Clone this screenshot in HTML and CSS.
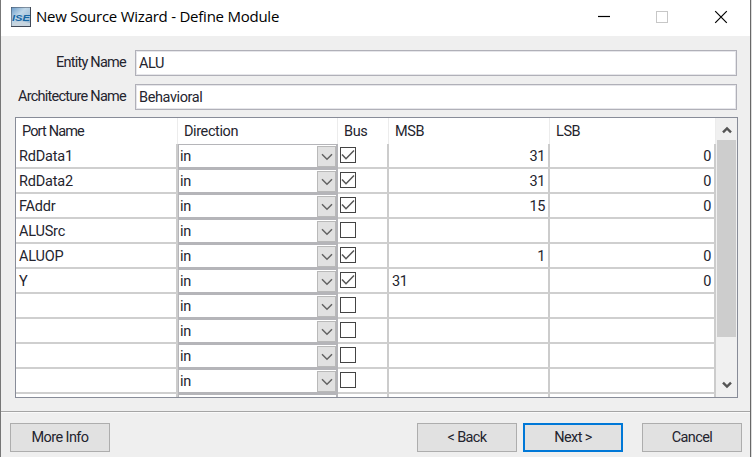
FILE: index.html
```html
<!DOCTYPE html>
<html lang="en">
<head>
<meta charset="utf-8">
<title>New Source Wizard</title>
<link rel="stylesheet" href="styles.css">
</head>
<body>
<svg class="defs" width="0" height="0">
  <symbol id="down" viewBox="0 0 12 8"><path d="M1 1.3 6 6.2 11 1.3" fill="none" stroke="#626262" stroke-width="1.5"/></symbol>
  <symbol id="tick" viewBox="0 0 16 16"><path d="M2 7.5 6 11.7 14 3.4" fill="none" stroke="#555" stroke-width="1.5"/></symbol>
</svg>
<div class="window">
  <header class="titlebar">
    <svg class="logo" width="20" height="20" viewBox="0 0 20 20">
      <defs><linearGradient id="sky" x1="0" y1="0" x2="1" y2="1"><stop offset="0" stop-color="#6b9dcb"/><stop offset=".4" stop-color="#bfd7e8"/><stop offset="1" stop-color="#8daecb"/></linearGradient></defs>
      <rect width="20" height="20" fill="#414957"/><rect x=".5" y=".5" width="18.5" height="18.5" fill="url(#sky)"/>
      <path d="M2 16 10 14 19 16V19H1Z" fill="#c8d5df"/>
      <text x="1" y="13.5" textLength="18" lengthAdjust="spacingAndGlyphs">ISE</text>
    </svg>
    <h1>New Source Wizard - Define Module</h1>
    <svg class="controls" width="140" height="14" viewBox="0 0 140 14" fill="none">
      <path d="M0 6.5h12" stroke="#000" stroke-width="1.2"/>
      <rect x="58.5" y="1.5" width="11" height="11" stroke="#c7c7c7"/>
      <path d="M117.2 1.2 128.8 12.8M128.8 1.2 117.2 12.8" stroke="#000" stroke-width="1.2"/>
    </svg>
  </header>
  <div class="form">
    <label><span class="t">Entity Name</span><div class="input"><span class="t">ALU</span></div></label>
    <label><span class="t">Architecture Name</span><div class="input"><span class="t">Behavioral</span></div></label>
  </div>
  <div class="table">
    <div class="grid">
      <div class="row head"><div><span class="t tight">Port Name</span></div><div><span class="t">Direction</span></div><div><span class="t">Bus</span></div><div><span class="t">MSB</span></div><div><span class="t">LSB</span></div></div>
      <div class="row"><div><span class="t">RdData1</span></div><div class="select"><span class="t">in</span><i><svg><use href="#down"/></svg></i></div><div class="bus"><b><svg><use href="#tick"/></svg></b></div><div class="num"><span class="t">31</span></div><div class="num"><span class="t">0</span></div></div>
      <div class="row"><div><span class="t">RdData2</span></div><div class="select"><span class="t">in</span><i><svg><use href="#down"/></svg></i></div><div class="bus"><b><svg><use href="#tick"/></svg></b></div><div class="num"><span class="t">31</span></div><div class="num"><span class="t">0</span></div></div>
      <div class="row"><div><span class="t">FAddr</span></div><div class="select"><span class="t">in</span><i><svg><use href="#down"/></svg></i></div><div class="bus"><b><svg><use href="#tick"/></svg></b></div><div class="num"><span class="t">15</span></div><div class="num"><span class="t">0</span></div></div>
      <div class="row"><div><span class="t">ALUSrc</span></div><div class="select"><span class="t">in</span><i><svg><use href="#down"/></svg></i></div><div class="bus"><b></b></div><div></div><div></div></div>
      <div class="row"><div><span class="t">ALUOP</span></div><div class="select"><span class="t">in</span><i><svg><use href="#down"/></svg></i></div><div class="bus"><b><svg><use href="#tick"/></svg></b></div><div class="num"><span class="t">1</span></div><div class="num"><span class="t">0</span></div></div>
      <div class="row"><div><span class="t">Y</span></div><div class="select"><span class="t">in</span><i><svg><use href="#down"/></svg></i></div><div class="bus"><b><svg><use href="#tick"/></svg></b></div><div><span class="t">31</span></div><div class="num"><span class="t">0</span></div></div>
      <div class="row"><div></div><div class="select"><span class="t">in</span><i><svg><use href="#down"/></svg></i></div><div class="bus"><b></b></div><div></div><div></div></div>
      <div class="row"><div></div><div class="select"><span class="t">in</span><i><svg><use href="#down"/></svg></i></div><div class="bus"><b></b></div><div></div><div></div></div>
      <div class="row"><div></div><div class="select"><span class="t">in</span><i><svg><use href="#down"/></svg></i></div><div class="bus"><b></b></div><div></div><div></div></div>
      <div class="row"><div></div><div class="select"><span class="t">in</span><i><svg><use href="#down"/></svg></i></div><div class="bus"><b></b></div><div></div><div></div></div>
      <div class="row partial"><div></div><div class="select"></div><div></div><div></div><div></div></div>
    </div>
    <div class="scroll">
      <svg width="10" height="8" viewBox="0 0 10 8"><path d="M1 6.4 5 2.4 9 6.4" fill="none" stroke="#555" stroke-width="2.4"/></svg>
      <div class="thumb"></div>
      <svg width="10" height="8" viewBox="0 0 10 8"><path d="M1 1.6 5 5.6 9 1.6" fill="none" stroke="#555" stroke-width="2.4"/></svg>
    </div>
  </div>
  <footer>
    <button class="more"><span class="t">More Info</span></button>
    <button><span class="t">&lt; Back</span></button>
    <button class="next"><span class="t">Next &gt;</span></button>
    <button class="cancel"><span class="t">Cancel</span></button>
  </footer>
</div>
</body>
</html>
```
FILE: styles.css
```css
* { box-sizing: border-box; }
body { margin: 0; width: 752px; height: 457px; overflow: hidden; background: #dcdcdc; font: 14.5px/18px Roboto, "Liberation Sans", sans-serif; color: #24242e; }
.defs { position: absolute; }
.window { width: 751px; height: 457px; background: #efefef; border-left: 1px solid #777; border-right: 1px solid #686868; overflow: hidden; }
.t { display: inline-block; white-space: nowrap; letter-spacing: -0.4px; }
.tight { letter-spacing: -0.85px; }
.titlebar { height: 36px; background: #fff; display: flex; align-items: center; padding: 0 22px 3px 10px; }
.logo text { font: italic bold 9px "Liberation Sans", sans-serif; fill: #1767a3; }
h1 { margin: -2px auto 0 5px; font: 15px/20px "Open Sans", sans-serif; letter-spacing: -0.24px; color: #000; white-space: nowrap; }
.controls { flex: none; margin-right: -10px; }
.form { height: 81px; padding: 14px 13px 0 0; display: flex; flex-direction: column; gap: 8px; }
label { display: grid; grid-template-columns: 125px 602px; gap: 9px; height: 26px; align-items: center; }
label > .t { justify-self: end; letter-spacing: -0.75px; }
.input { height: 26px; background: #fff; border: 1px solid #b0b0b8; box-shadow: inset 0 0 0 1px #e6e6ea; padding: 4px 3px; }
.table { margin-left: 14px; width: 723px; height: 281px; border: 1px solid #888c98; background: #fff; display: flex; overflow: hidden; }
.grid { width: 700px; flex: none; }
.row { display: grid; grid-template-columns: 162px 160px 51px 161px 166px; height: 25px; }
.row > div { border-right: 2px solid #ccc; border-bottom: 2px solid #cfcfcf; padding: 4px 3px 0; height: 25px; }
.row:not(.head) > div:first-child .t { letter-spacing: -0.2px; }
.head { height: 26px; }
.row.head > div { border-right: 1px solid #ececec; border-bottom: 0; padding: 5px 6px 0; height: 26px; }
.row > .select { display: flex; justify-content: space-between; padding: 1px 0 0 1px; border: 1px solid #b5b5b9; border-width: 1px 2px 2px 1px; }
.select .t { margin-top: 2px; }
i { width: 19px; height: 21px; background: #e1e1e1; border: 1px solid #b9b9b9; display: flex; align-items: center; justify-content: center; }
i svg { width: 12px; height: 8px; }
.row > .bus { padding: 3px 2px; }
b { display: block; width: 16px; height: 16px; border: 1px solid #444; }
b svg { width: 16px; height: 16px; margin: -1px; display: block; }
.row > .num { text-align: right; }
.partial { height: 4px; overflow: hidden; }
.scroll { flex: 1; background: #f0f0f0; display: flex; flex-direction: column; align-items: center; padding: 8px 1px; }
.thumb { align-self: stretch; height: 197px; margin: 6px 0 auto; background: #cdcdcd; }
footer { margin-top: 13px; height: 46px; border-top: 1px solid #a5a5a5; box-shadow: inset 0 1px #fafafa; display: flex; padding: 11px 8px 0 9px; }
button { width: 100px; height: 29px; padding: 0; border: 1px solid #adadad; background: #e1e1e1; font: inherit; color: inherit; margin-right: 6px; flex: none; }
button .t { letter-spacing: -0.6px; }
.more { margin-right: 307px; }
.next { border: 2px solid #0078d7; margin-right: 19px; }
.cancel { margin-right: 0; }
```
